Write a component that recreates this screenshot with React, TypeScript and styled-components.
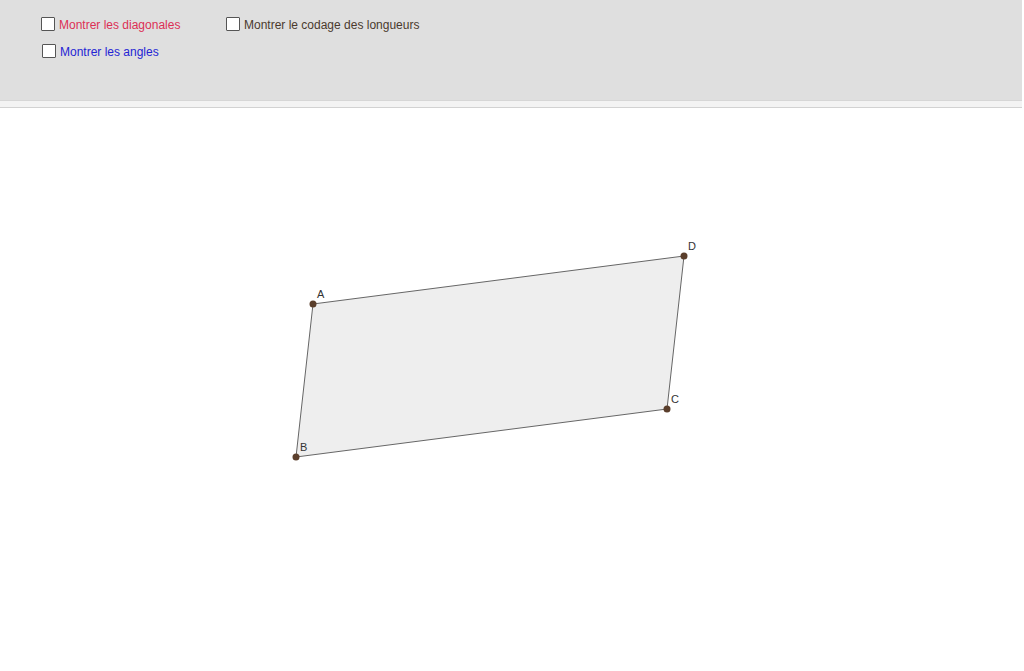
import React from "react";
import styled, { createGlobalStyle } from "styled-components";

const Global = createGlobalStyle`
  html, body { margin: 0; padding: 0; background: #ffffff; }
  body { font-family: "Liberation Sans", Arial, sans-serif; overflow: hidden; }
`;

const Page = styled.div`
  width: 1024px;
  height: 671px;
  display: flex;
  flex-direction: column;
  background: #ffffff;
`;

const Header = styled.div`
  height: 100px;
  background: #dfdfdf;
  box-sizing: border-box;
  padding: 17px 0 0 41px;
  display: flex;
  flex-direction: column;
  gap: 13px;
  width: 1022px;
`;

const Strip = styled.div`
  width: 1022px;
  background: #f3f3f3;
  border-top: 1px solid #d6d6d6;
  border-bottom: 1px solid #d2d2d2;
  box-sizing: border-box;
  height: 8px;
`;

const Row = styled.div<{ $indent?: number }>`
  display: flex;
  align-items: center;
  height: 14px;
  padding-left: ${(p) => p.$indent ?? 0}px;
`;

const Option = styled.label<{ $color: string; $width?: number }>`
  display: flex;
  align-items: center;
  gap: 4px;
  font-size: 12px;
  line-height: 14px;
  padding-top: 1px;
  color: ${(p) => p.$color};
  width: ${(p) => (p.$width ? `${p.$width}px` : "auto")};
  white-space: nowrap;
  cursor: pointer;
`;

const Box = styled.span`
  width: 12px;
  height: 12px;
  margin-top: -1px;
  border: 1px solid #555;
  border-radius: 1px;
  background: #fff;
  display: inline-block;
  flex-shrink: 0;
`;

const Canvas = styled.div`
  flex: 1;
  position: relative;
`;

const Diagram = styled.svg`
  display: block;
  width: 1024px;
  height: 563px;
`;

const pts = {
  A: [313, 303],
  B: [296, 456],
  C: [667, 408],
  D: [684, 255],
} as const;

const labels: { n: string; x: number; y: number }[] = [
  { n: "A", x: 317, y: 297 },
  { n: "B", x: 300, y: 450 },
  { n: "C", x: 671, y: 402 },
  { n: "D", x: 688, y: 249 },
];

export default function App() {
  const poly = [pts.A, pts.B, pts.C, pts.D].map((p) => p.join(",")).join(" ");
  return (
    <Page>
      <Global />
      <Header>
        <Row>
          <Option $color="#dc2f55" $width={185}>
            <Box />
            Montrer les diagonales
          </Option>
          <Option $color="#4a3a2e">
            <Box />
            Montrer le codage des longueurs
          </Option>
        </Row>
        <Row $indent={1}>
          <Option $color="#2424d4">
            <Box />
            Montrer les angles
          </Option>
        </Row>
      </Header>
      <Strip />
      <Canvas>
        <Diagram viewBox="0 107 1024 563">
          <polygon points={poly} fill="#eeeeee" stroke="#666666" strokeWidth={1} />
          {Object.values(pts).map(([x, y], i) => (
            <circle key={i} cx={x} cy={y} r={3.5} fill="#5b3f2c" />
          ))}
          {labels.map((l) => (
            <text
              key={l.n}
              x={l.x}
              y={l.y}
              fontSize={11}
              fontFamily="Liberation Sans, Arial, sans-serif"
              fill="#333"
            >
              {l.n}
            </text>
          ))}
        </Diagram>
      </Canvas>
    </Page>
  );
}
